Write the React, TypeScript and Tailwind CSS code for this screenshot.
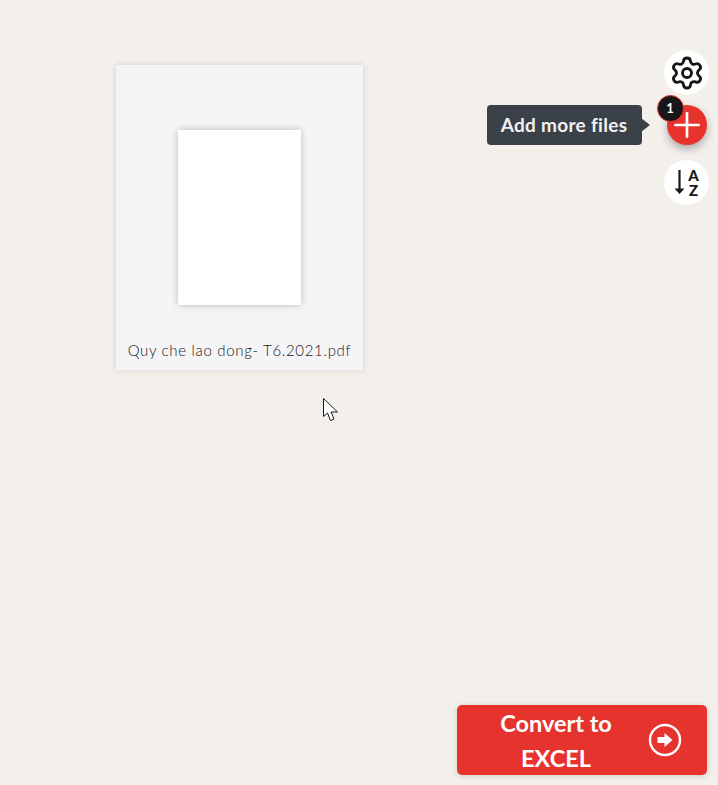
import React from "react";
import { Plus, Settings } from "lucide-react";

const App: React.FC = () => {
  return (
    <div className="relative flex h-[785px] w-[718px] overflow-hidden bg-[#f3f0ec] font-['Lato','Open_Sans',sans-serif]">
      {/* File card */}
      <div className="ml-[116px] mt-[65px] flex h-[305px] w-[247px] shrink-0 flex-col items-center bg-[#f5f5f8] shadow-[0_0_6px_rgba(0,0,0,0.14)]">
        <div className="mt-[65px] h-[175px] w-[123px] bg-white shadow-[0_0_7px_rgba(0,0,0,0.24)]" />
        <p className="mt-[35px] whitespace-nowrap text-[15px] font-light leading-5 tracking-[0.68px] text-[#15151c]">
          Quy che lao dong- T6.2021.pdf
        </p>
      </div>

      {/* Mouse pointer in the capture */}
      <svg className="absolute left-[323px] top-[398px]" width="16" height="25" viewBox="0 0 16 25">
        <path
          d="M0.5 0.5V18.5L4.5 15L7.5 22.5L11 21L8 14H14.5Z"
          fill="#fff"
          stroke="#1a1a1a"
          strokeWidth="1"
        />
      </svg>

      {/* Right column */}
      <div className="ml-auto flex w-[250px] shrink-0 flex-col items-end pb-[10px] pr-[11px] pt-[50px]">
        <div className="-mr-[2px] flex flex-col items-center">
          <button className="flex h-[45px] w-[45px] items-center justify-center rounded-full bg-white">
            <Settings size={36} strokeWidth={1.9} className="text-[#15171a]" />
          </button>

          <button className="relative mt-[10px] flex h-10 w-10 items-center justify-center rounded-full bg-[#e7332e] shadow-[0_4px_8px_rgba(0,0,0,0.3)]">
            <Plus size={40} strokeWidth={1.6} className="text-white" />
            <span className="absolute left-[-10px] top-[-10px] flex h-[27px] w-[27px] items-center justify-center rounded-full border border-[#e7332e] bg-[#17171a] text-[13px] font-bold text-white">
              1
            </span>
            {/* Tooltip */}
            <span className="absolute right-[65px] top-0 flex h-10 w-[155px] items-center justify-center whitespace-nowrap rounded-[4px] bg-[#3b4149] text-[19px] font-bold tracking-[0.3px] text-[#f1f1f1]">
              Add more files
              <span className="absolute right-[-8px] top-[13px] h-0 w-0 border-y-[7px] border-l-[9px] border-y-transparent border-l-[#3b4149]" />
            </span>
          </button>

          <button className="mt-[15px] flex h-[45px] w-[45px] items-center justify-center gap-[3px] rounded-full bg-white text-[#15171a]">
            <svg width="11" height="25" viewBox="0 0 11 25">
              <path d="M5.5 0V20" stroke="currentColor" strokeWidth="2.2" fill="none" />
              <path d="M0.5 18.5H10.5L5.5 24Z" fill="currentColor" />
            </svg>
            <span className="flex flex-col pt-px text-[15px] font-black leading-[15px]">
              <span>A</span>
              <span>Z</span>
            </span>
          </button>
        </div>

        {/* Convert */}
        <button className="mt-auto flex h-[70px] w-[250px] items-center rounded-[5px] bg-[#e7332e] pl-[7px] pr-[25px] text-white shadow-[0_1px_6px_rgba(0,0,0,0.15)]">
          <span className="flex-1 pt-[2px] text-center text-[23.5px] font-bold leading-[35px]">
            Convert to
            <br />
            EXCEL
          </span>
          <svg width="34" height="34" viewBox="0 0 34 34" className="shrink-0">
            <circle cx="17" cy="17" r="15" fill="none" stroke="#fff" strokeWidth="2.4" />
            <path d="M9.5 14H16.5V10L24.5 17L16.5 24V20H9.5Z" fill="#fff" />
          </svg>
        </button>
      </div>
    </div>
  );
};

export default App;
